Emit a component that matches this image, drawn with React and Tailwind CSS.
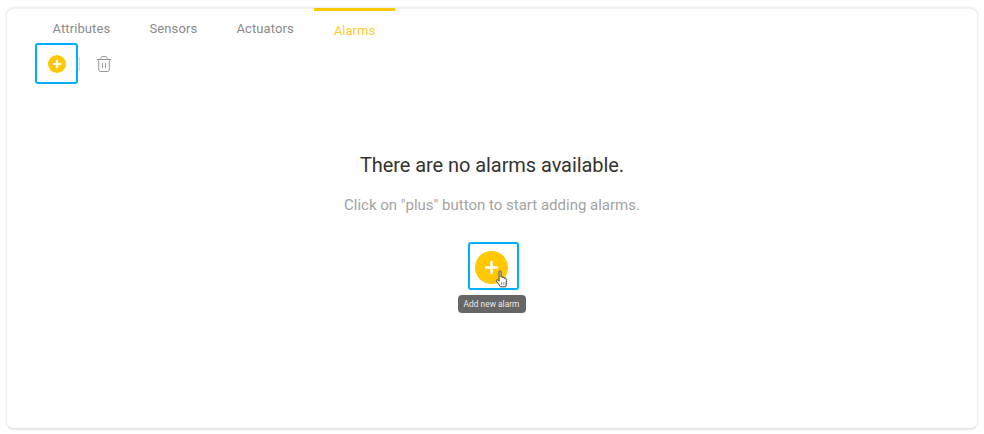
import { Trash2 } from 'lucide-react';

function PlusCircle({ size, plus, stroke }) {
  const mid = size / 2;
  const half = plus / 2;
  return (
    <svg width={size} height={size} viewBox={`0 0 ${size} ${size}`} className="block">
      <circle cx={mid} cy={mid} r={mid} fill="#ffc800" />
      <path d={`M${mid - half} ${mid}H${mid + half}M${mid} ${mid - half}V${mid + half}`} stroke="#fff" strokeWidth={stroke} strokeLinecap="round" />
    </svg>
  );
}

function HandCursor() {
  return (
    <svg width="15" height="20" viewBox="0 0 14 20" className="absolute left-[27px] top-[28px]">
      <path
        d="M3.6 1.6c0-1 1.9-1 1.9 0v5.6c0-.9 1.7-.9 1.7 0v.7c0-.9 1.7-.9 1.7 0v.7c0-.9 1.7-.8 1.7.2.4 2.3.8 4.700-.5 8H4.800C3.900 15.200 2.600 13.400 1 11.200c-.7-1.100.6-2.100 1.500-1.200l1.100 1.200z"
        fill="#fff"
        stroke="#444"
        strokeWidth="1"
        strokeLinejoin="round"
      />
      <path d="M6 12v3M7.800 12v3M9.600 12v3" stroke="#777" strokeWidth="0.7" />
    </svg>
  );
}

export default function App() {
  const tabClass = 'text-[13px] leading-[15px] text-[#8a8a8a] tracking-[0.1px]';

  return (
    <div className="w-[984px] h-[434px] bg-white overflow-hidden font-['Roboto',sans-serif] pl-[6px] pt-[7px] pr-[6px] pb-[4px]">
      <div className="h-full border border-[#f0f0f0] border-t-2 border-t-[#f0f0f0] border-b-2 border-b-[#e8e8e8] rounded-[8px] shadow-[0_0_2px_rgba(0,0,0,0.08)] flex flex-col">
        {/* Tabs */}
        <div className="flex h-[31px] pl-[45.500px]">
          <div className={`${tabClass} pt-[12px] w-[97px]`}>Attributes</div>
          <div className={`${tabClass} pt-[12px] w-[87px]`}>Sensors</div>
          <div className={`${tabClass} pt-[12px] w-[77.500px]`}>Actuators</div>
          <div className="w-[81px] h-[31px] -mt-[1px] border-t-[3px] border-[#ffc800] text-[13px] leading-[15px] text-[#ffca2c] text-center pt-[12px]">
            Alarms
          </div>
        </div>

        {/* Toolbar */}
        <div className="flex items-center pl-[28px] h-[42px] mt-[2px]">
          <button className="w-[43px] h-[41px] border-2 border-[#00aeff] rounded-[3px] flex items-center justify-center pt-[2px]">
            <PlusCircle size={18} plus={7} stroke={2.2} />
          </button>
          <div className="w-px h-[14px] bg-[#dddddd] ml-[1px] mt-[2px]" />
          <Trash2 size={18} strokeWidth={1.2} color="#8c8c8c" className="ml-[15px] mt-[2px]" />
        </div>

        {/* Empty state */}
        <div className="flex flex-col items-center pt-[69px]">
          <h2 className="text-[20px] leading-[24px] text-[#333333] font-normal tracking-[-0.07px]">There are no alarms available.</h2>
          <p className="text-[15px] leading-[20px] text-[#a3a3a3] mt-[18px]">Click on "plus" button to start adding alarms.</p>
          <div className="relative mt-[27px] left-[1px]">
            <button className="w-[51px] h-[48px] border-2 border-[#00aeff] rounded-[3px] flex items-center justify-center pt-[2px] pr-[3px]">
              <PlusCircle size={33} plus={11} stroke={2.5} />
            </button>
            <HandCursor />
            <div className="absolute left-[-10px] top-[53px] w-[68px] h-[18px] rounded-[4px] bg-[#666666] text-[#e8e8e8] text-[8.400px] leading-[18px] text-center whitespace-nowrap">
              Add new alarm
            </div>
          </div>
        </div>
      </div>
    </div>
  );
}
